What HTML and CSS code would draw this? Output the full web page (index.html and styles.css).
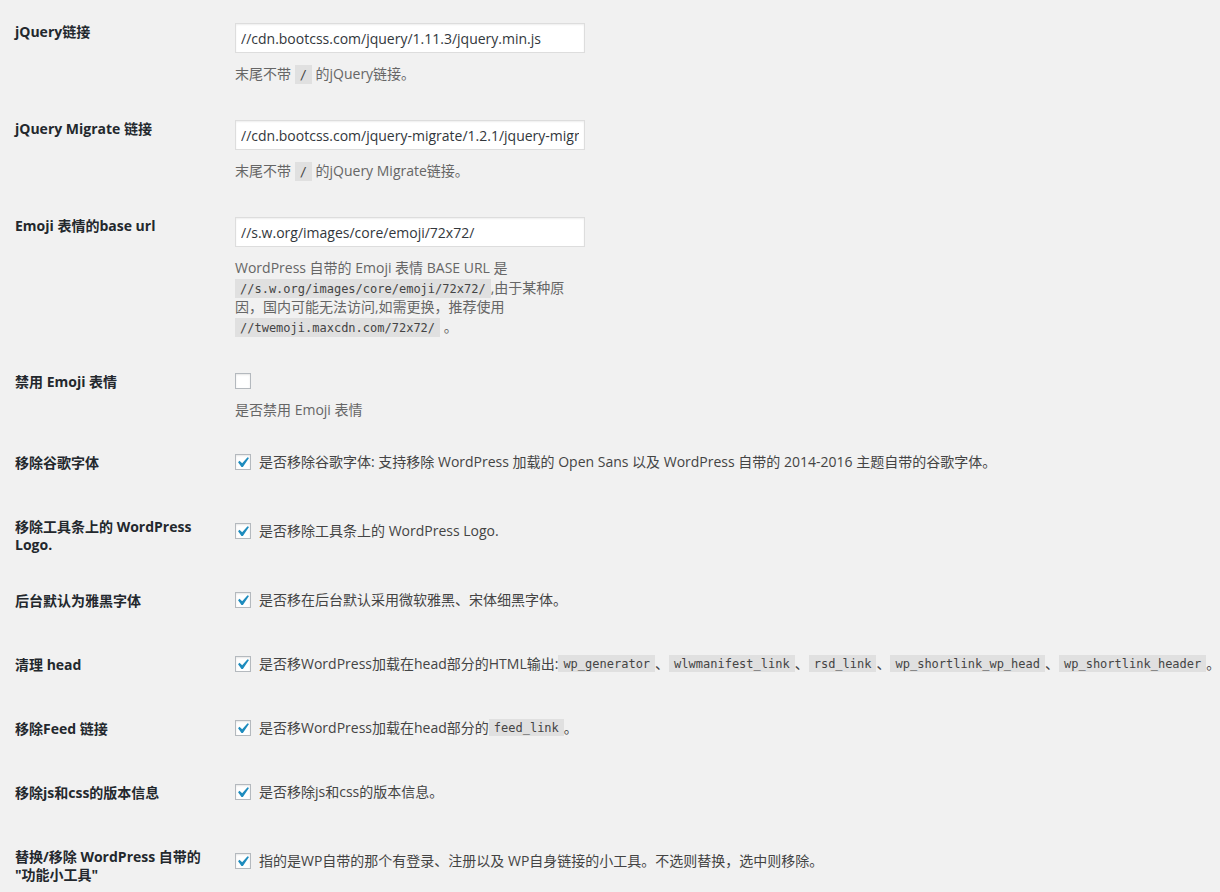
FILE: index.html
```html
<!DOCTYPE html>
<html lang="zh-CN">
<head>
<meta charset="utf-8">
<title>设置</title>
<link rel="stylesheet" href="styles.css">
</head>
<body>
<div class="wrap">

  <div class="row">
    <div class="th">jQuery链接</div>
    <div class="td td-input">
      <input class="text" type="text" value="//cdn.bootcss.com/jquery/1.11.3/jquery.min.js">
      <p class="desc">末尾不带 <code>/</code> 的jQuery链接。</p>
    </div>
  </div>

  <div class="row">
    <div class="th">jQuery Migrate 链接</div>
    <div class="td td-input">
      <input class="text" type="text" value="//cdn.bootcss.com/jquery-migrate/1.2.1/jquery-migrate.min.js">
      <p class="desc">末尾不带 <code>/</code> 的jQuery Migrate链接。</p>
    </div>
  </div>

  <div class="row">
    <div class="th">Emoji 表情的base url</div>
    <div class="td td-input">
      <input class="text" type="text" value="//s.w.org/images/core/emoji/72x72/">
      <p class="desc">WordPress 自带的 Emoji 表情 BASE URL 是 <code>//s.w.org/images/core/emoji/72x72/</code>,由于某种原因，国内可能无法访问,如需更换，推荐使用 <code>//twemoji.maxcdn.com/72x72/</code> 。</p>
    </div>
  </div>

  <div class="row">
    <div class="th">禁用 Emoji 表情</div>
    <div class="td td-input td-cbdesc">
      <span class="cb"></span>
      <p class="desc">是否禁用 Emoji 表情</p>
    </div>
  </div>

  <div class="row row-cb">
    <div class="th">移除谷歌字体</div>
    <div class="td">
      <label class="cbline"><span class="cb on"><svg viewBox="0 0 20 20"><path d="M14.83 4.89l1.34.94-5.81 8.38H9.02L5.78 9.67l1.34-1.25 2.57 2.4z"/></svg></span>是否移除谷歌字体: 支持移除 WordPress 加载的 Open Sans 以及 WordPress 自带的 2014-2016 主题自带的谷歌字体。</label>
    </div>
  </div>

  <div class="row row-cb">
    <div class="th">移除工具条上的 WordPress Logo.</div>
    <div class="td">
      <label class="cbline"><span class="cb on"><svg viewBox="0 0 20 20"><path d="M14.83 4.89l1.34.94-5.81 8.38H9.02L5.78 9.67l1.34-1.25 2.57 2.4z"/></svg></span>是否移除工具条上的 WordPress Logo.</label>
    </div>
  </div>

  <div class="row row-cb">
    <div class="th">后台默认为雅黑字体</div>
    <div class="td">
      <label class="cbline"><span class="cb on"><svg viewBox="0 0 20 20"><path d="M14.83 4.89l1.34.94-5.81 8.38H9.02L5.78 9.67l1.34-1.25 2.57 2.4z"/></svg></span>是否移在后台默认采用微软雅黑、宋体细黑字体。</label>
    </div>
  </div>

  <div class="row row-cb">
    <div class="th">清理 head</div>
    <div class="td">
      <label class="cbline"><span class="cb on"><svg viewBox="0 0 20 20"><path d="M14.83 4.89l1.34.94-5.81 8.38H9.02L5.78 9.67l1.34-1.25 2.57 2.4z"/></svg></span>是否移WordPress加载在head部分的HTML输出:<code>wp_generator</code> 、 <code>wlwmanifest_link</code> 、 <code>rsd_link</code> 、 <code>wp_shortlink_wp_head</code> 、 <code>wp_shortlink_header</code> 。</label>
    </div>
  </div>

  <div class="row row-cb">
    <div class="th">移除Feed 链接</div>
    <div class="td">
      <label class="cbline"><span class="cb on"><svg viewBox="0 0 20 20"><path d="M14.83 4.89l1.34.94-5.81 8.38H9.02L5.78 9.67l1.34-1.25 2.57 2.4z"/></svg></span>是否移WordPress加载在head部分的<code>feed_link</code> 。</label>
    </div>
  </div>

  <div class="row row-cb">
    <div class="th">移除js和css的版本信息</div>
    <div class="td">
      <label class="cbline"><span class="cb on"><svg viewBox="0 0 20 20"><path d="M14.83 4.89l1.34.94-5.81 8.38H9.02L5.78 9.67l1.34-1.25 2.57 2.4z"/></svg></span>是否移除js和css的版本信息。</label>
    </div>
  </div>

  <div class="row row-cb">
    <div class="th">替换/移除 WordPress 自带的 "功能小工具"</div>
    <div class="td">
      <label class="cbline"><span class="cb on"><svg viewBox="0 0 20 20"><path d="M14.83 4.89l1.34.94-5.81 8.38H9.02L5.78 9.67l1.34-1.25 2.57 2.4z"/></svg></span>指的是WP自带的那个有登录、注册以及 WP自身链接的小工具。不选则替换，选中则移除。</label>
    </div>
  </div>

</div>
</body>
</html>
```

FILE: styles.css
```css
* {
  box-sizing: border-box;
}

html,
body {
  margin: 0;
  padding: 0;
  background: #f1f1f1;
}

body {
  font-family: "Open Sans", "Noto Sans CJK SC", sans-serif;
  font-size: 14px;
  color: #444;
}

.wrap {
  padding: 3px 0 0 15px;
}

.row {
  display: grid;
  grid-template-columns: 210px 1fr;
}

.th {
  align-self: start;
  padding: 20px 10px 18px 0;
  font-weight: 700;
  line-height: 18px;
  color: #23282d;
}

.td {
  padding: 0 10px;
}

.td-input {
  align-self: start;
  padding: 20px 10px 16.5px;
}

.td-cbdesc {
  padding-bottom: 14.5px;
}

.text {
  display: block;
  width: 350px;
  height: 30px;
  margin: 0;
  padding: 0 5px;
  border: 1px solid #ddd;
  border-radius: 0;
  background: #fff;
  box-shadow: inset 0 1px 2px rgba(0, 0, 0, 0.07);
  font-family: "Open Sans", "Noto Sans CJK SC", sans-serif;
  font-size: 14px;
  color: #32373c;
  outline: none;
}

.desc {
  margin: 11px 0 0;
  max-width: 330px;
  line-height: 19.5px;
  font-size: 14px;
  color: #666;
}

code {
  padding: 3px 5px 2px;
  background: rgba(0, 0, 0, 0.07);
  font-family: "DejaVu Sans Mono", monospace;
  font-size: 12px;
  line-height: 1;
  color: #444;
}

.row-cb {
  min-height: 64px;
}

.row-cb .td {
  align-self: center;
  padding-bottom: 8px;
}

.cbline {
  display: flex;
  align-items: center;
  line-height: 20px;
  white-space: nowrap;
  color: #444;
}

.cb {
  position: relative;
  display: block;
  flex: none;
  width: 16px;
  height: 16px;
  margin-right: 8px;
  border: 1px solid #b4b9be;
  background: #fff;
  box-shadow: inset 0 1px 2px rgba(0, 0, 0, 0.1);
}

.cb svg {
  position: absolute;
  left: -4px;
  top: -3px;
  width: 21px;
  height: 21px;
  fill: #1e8cbe;
}
```
